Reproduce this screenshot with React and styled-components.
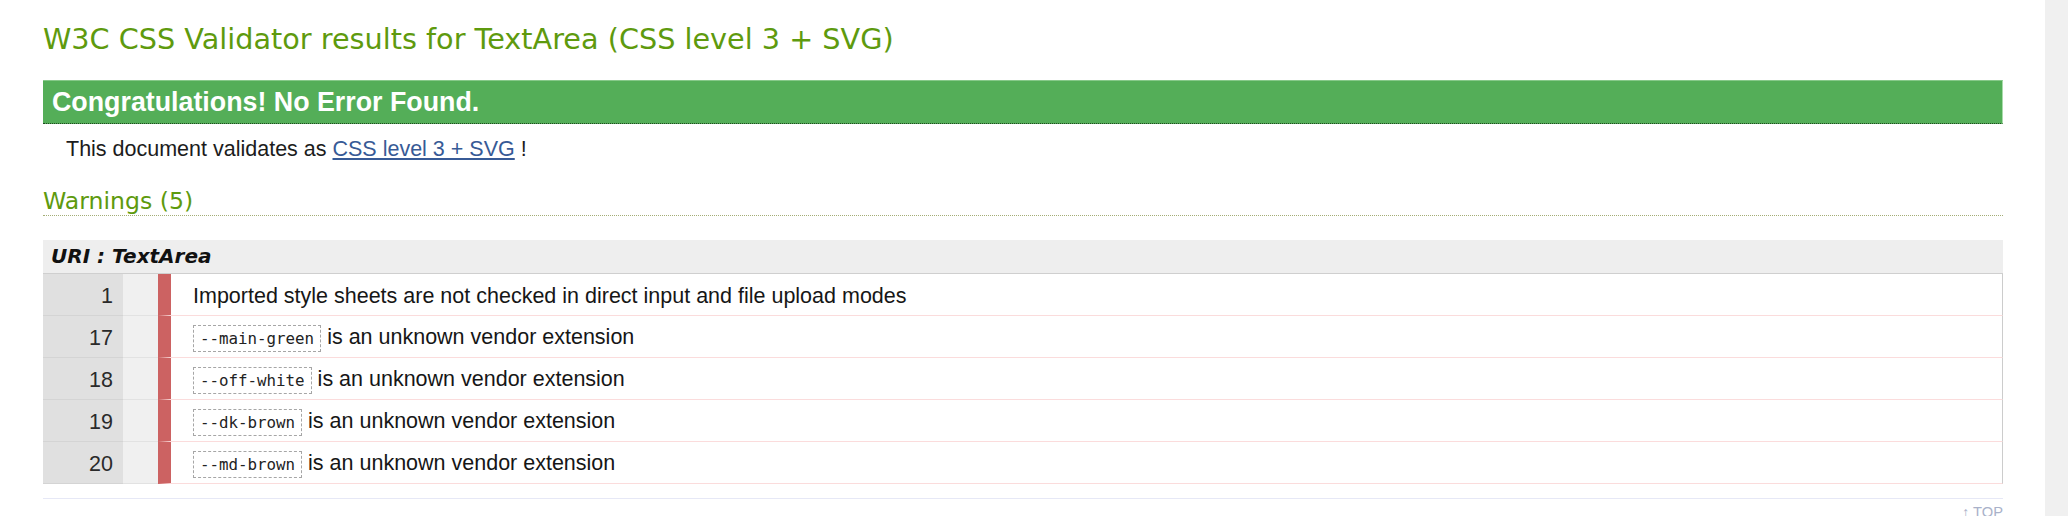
import React from 'react';
import styled, { createGlobalStyle } from 'styled-components';

const GlobalStyle = createGlobalStyle`
  html, body {
    margin: 0;
    padding: 0;
    background: #fff;
  }
  body {
    font-family: "Liberation Sans", Arial, sans-serif;
    color: #1c1c1c;
  }
`;

const warnings = [
  { line: 1, text: 'Imported style sheets are not checked in direct input and file upload modes' },
  { line: 17, code: '--main-green', text: 'is an unknown vendor extension' },
  { line: 18, code: '--off-white', text: 'is an unknown vendor extension' },
  { line: 19, code: '--dk-brown', text: 'is an unknown vendor extension' },
  { line: 20, code: '--md-brown', text: 'is an unknown vendor extension' },
];

const Page = styled.div`
  display: flex;
  height: 516px;
  overflow: hidden;
`;

const Main = styled.main`
  flex: 1;
  padding: 0 42px 0 43px;
`;

const Gutter = styled.div`
  width: 23px;
  background: #f0f0f0;
`;

const Title = styled.h1`
  margin: 22px 0 0;
  font-family: "DejaVu Sans", Verdana, sans-serif;
  font-size: 28.7px;
  font-weight: 400;
  line-height: normal;
  color: #5e9a0e;
`;

const Banner = styled.div`
  margin-top: 24px;
  height: 42px;
  padding-left: 9px;
  background: #54ae58;
  border-top: 1px solid #86c989;
  border-right: 1px solid #a8dcaa;
  border-bottom: 1px dotted #1f4a20;
  color: #fff;
  font-size: 26.8px;
  font-weight: 700;
  line-height: 42px;
`;

const Validates = styled.p`
  margin: 13px 0 0 23px;
  font-size: 21.5px;
  line-height: normal;
`;

const Link = styled.a`
  color: #375a96;
  text-decoration: underline;
`;

const SectionTitle = styled.h2`
  margin: 25px 0 0;
  font-family: "DejaVu Sans", Verdana, sans-serif;
  font-size: 23.6px;
  font-weight: 400;
  line-height: normal;
  color: #5e9a0e;
  border-bottom: 1px dotted #a4ad76;
`;

const UriHeader = styled.div`
  margin-top: 24px;
  height: 33px;
  padding-left: 8px;
  background: #eeeeee;
  font-family: "DejaVu Sans", Verdana, sans-serif;
  font-size: 20px;
  font-weight: 700;
  font-style: italic;
  line-height: 33px;
  color: #111;
`;

const Table = styled.table`
  width: 100%;
  border-spacing: 0;
  border-top: 1px solid #cfcfcf;
  font-size: 21.5px;
`;

const NumCell = styled.td`
  width: 70px;
  height: 38px;
  padding: 3px 10px 0 0;
  background: #e0e0e0;
  border-bottom: 1px solid #d4d4d4;
  text-align: right;
  color: #2a2a2a;
`;

const CtxCell = styled.td`
  width: 35px;
  padding: 0;
  background: #f0f0f0;
  border-bottom: 1px solid #e2e2e2;
`;

const MsgCell = styled.td`
  padding: 3px 0 0 22px;
  border-left: 13px solid #cc6262;
  border-right: 1px solid #cccccc;
  border-bottom: 1px solid #fbdcdc;
  color: #161616;
`;

const Code = styled.code`
  display: inline-block;
  padding: 2px 6px;
  border: 1px dashed #a6a6a6;
  font-family: "DejaVu Sans Mono", Consolas, monospace;
  font-size: 15.8px;
  line-height: 21px;
  color: #222;
`;

const Rule = styled.div`
  margin-top: 14px;
  border-top: 1px solid #e6e8f6;
`;

const TopLink = styled.div`
  margin-top: 5px;
  text-align: right;
  font-size: 14.7px;
  line-height: 17px;
  color: #a9b1c9;
`;

const App = () => {
  return (
    <>
      <GlobalStyle />
      <Page>
        <Main>
          <Title>W3C CSS Validator results for TextArea (CSS level 3 + SVG)</Title>
          <Banner>Congratulations! No Error Found.</Banner>
          <Validates>
            This document validates as <Link href="#">CSS level 3 + SVG</Link> !
          </Validates>
          <SectionTitle>Warnings (5)</SectionTitle>
          <UriHeader>URI : TextArea</UriHeader>
          <Table>
            <tbody>
              {warnings.map((w) => (
                <tr key={w.line}>
                  <NumCell>{w.line}</NumCell>
                  <CtxCell />
                  <MsgCell>
                    {w.code && <Code>{w.code}</Code>} {w.text}
                  </MsgCell>
                </tr>
              ))}
            </tbody>
          </Table>
          <Rule />
          <TopLink>↑ TOP</TopLink>
        </Main>
        <Gutter />
      </Page>
    </>
  );
};

export default App;
